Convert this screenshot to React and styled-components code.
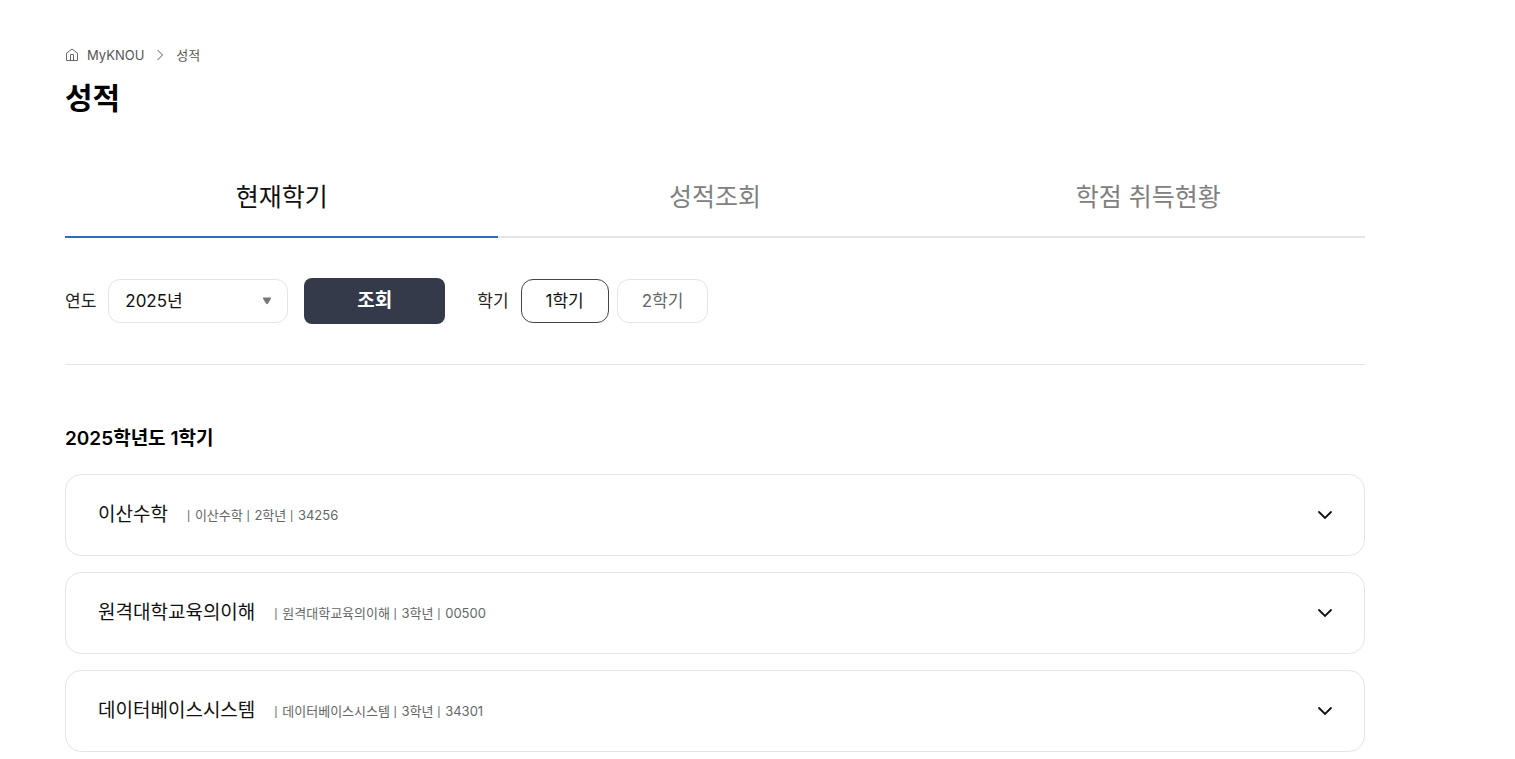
import { useState } from "react";
import styled, { createGlobalStyle } from "styled-components";

const tabs = ["현재학기", "성적조회", "학점 취득현황"];

const subjects = [
  { name: "이산수학", grade: "2학년", code: "34256" },
  { name: "원격대학교육의이해", grade: "3학년", code: "00500" },
  { name: "데이터베이스시스템", grade: "3학년", code: "34301" },
];

const Grades = () => {
  const [tab, setTab] = useState(0);
  const [semester, setSemester] = useState(1);

  return (
    <Container>
      <Breadcrumb aria-label="breadcrumb">
        <a href="#home">
          <svg width="14" height="14" viewBox="0 0 14 14" fill="none" stroke="#666">
            <path d="M1.500 5.200 7 1l5.500 4.200v7.300h-11z" strokeLinejoin="round" />
            <path d="M5.500 12V6.500h3V12" />
          </svg>
          MyKNOU
        </a>
        <svg width="8" height="12" viewBox="0 0 8 12" fill="none" stroke="#555">
          <path d="m1.500 1 5 5-5 5" />
        </svg>
        <a href="#grades">성적</a>
      </Breadcrumb>
      <PageTitle>성적</PageTitle>

      <TabList>
        {tabs.map((name, index) => (
          <Tab key={name} $active={tab === index} onClick={() => setTab(index)}>
            {name}
          </Tab>
        ))}
      </TabList>

      <Filter>
        <label htmlFor="year">연도</label>
        <SelectBox>
          <select id="year" defaultValue="2025">
            <option value="2025">2025년</option>
            <option value="2024">2024년</option>
          </select>
          <svg width="10" height="8" viewBox="0 0 10 8" fill="#777">
            <path d="M1.800.5h6.400q1.400 0 .7 1.200L6 6.500q-1 1.300-2 0L1.100 1.700Q.4.5 1.800.5z" />
          </svg>
        </SelectBox>
        <SearchButton>조회</SearchButton>
        <span>학기</span>
        <SemesterGroup>
          {[1, 2].map((item) => (
            <SemesterButton
              key={item}
              $active={semester === item}
              onClick={() => setSemester(item)}
            >
              {item}학기
            </SemesterButton>
          ))}
        </SemesterGroup>
      </Filter>

      <SectionTitle>2025학년도 1학기</SectionTitle>
      <SubjectList>
        {subjects.map((item) => (
          <li key={item.code}>
            <SubjectButton aria-expanded="false">
              <span className="name">{item.name}</span>
              <span className="info">
                <Bar>|</Bar> {item.name} <Bar>|</Bar> {item.grade} <Bar>|</Bar>{" "}
                {item.code}
              </span>
              <svg
                width="16"
                height="10"
                viewBox="0 0 16 10"
                fill="none"
                stroke="#111"
                strokeWidth="1.8"
                strokeLinecap="round"
              >
                <path d="m2 2 6 6 6-6" />
              </svg>
            </SubjectButton>
          </li>
        ))}
      </SubjectList>
    </Container>
  );
};

export default function App() {
  return (
    <>
      <GlobalStyle />
      <Grades />
    </>
  );
}

const GlobalStyle = createGlobalStyle`
  * {
    box-sizing: border-box;
  }
  body {
    margin: 0;
    background: #fff;
    color: #111;
  }
  body, button, select {
    font-family: Inter, "Noto Sans CJK KR", sans-serif;
  }
  button {
    cursor: pointer;
    line-height: 24px;
  }
  a {
    color: inherit;
    text-decoration: none;
  }
`;

const Container = styled.main`
  max-width: 1365px;
  padding: 45px 0 7px 65px;
`;

const Breadcrumb = styled.nav`
  display: flex;
  align-items: center;
  gap: 12px;
  height: 20px;
  font-size: 13px;
  line-height: 20px;
  color: #555;
  a {
    display: flex;
    align-items: center;
    gap: 8px;
  }
`;

const PageTitle = styled.h1`
  margin: 11px 0 0;
  font-size: 30px;
  line-height: 44px;
  font-weight: 700;
  color: #000;
`;

const TabList = styled.div`
  display: flex;
  margin-top: 36px;
`;

const Tab = styled.button`
  flex: 1;
  height: 82px;
  padding: 2px 0 0;
  border: 0;
  border-bottom: 2px solid ${({ $active }) => ($active ? "#3068c4" : "#e5e5e5")};
  background: none;
  font-size: 25px;
  color: ${({ $active }) => ($active ? "#111" : "#808080")};
`;

const Filter = styled.div`
  display: flex;
  align-items: center;
  padding: 40px 0;
  border-bottom: 1px solid #e5e5e5;
  font-size: 17px;
  line-height: 24px;
  color: #222;
`;

const SelectBox = styled.div`
  position: relative;
  margin: 0 16px 0 12px;
  select {
    display: block;
    width: 180px;
    height: 44px;
    padding: 0 16px;
    border: 1px solid #e5e5e5;
    border-radius: 12px;
    appearance: none;
    background: #fff;
    font-size: 17px;
    color: #111;
  }
  svg {
    position: absolute;
    top: 18px;
    right: 16px;
    pointer-events: none;
  }
`;

const SearchButton = styled.button`
  width: 141px;
  height: 46px;
  margin-right: 32px;
  border: 0;
  border-radius: 8px;
  background: #353a4a;
  font-size: 19px;
  font-weight: 700;
  color: #fff;
`;

const SemesterGroup = styled.div`
  display: flex;
  gap: 8px;
  margin-left: 12px;
`;

const SemesterButton = styled.button`
  height: 44px;
  padding: 0 24px;
  border: 1px solid ${({ $active }) => ($active ? "#444" : "#e5e5e5")};
  border-radius: 12px;
  background: #fff;
  font-size: 17px;
  color: ${({ $active }) => ($active ? "#111" : "#666")};
`;

const SectionTitle = styled.h2`
  margin: 60px 0 21px;
  font-size: 19px;
  line-height: 28px;
  font-weight: 600;
  color: #000;
`;

const SubjectList = styled.ul`
  display: flex;
  flex-direction: column;
  gap: 16px;
  margin: 0;
  padding: 0;
  list-style: none;
`;

const SubjectButton = styled.button`
  display: flex;
  align-items: center;
  width: 100%;
  height: 82px;
  padding: 0 31px 0 32px;
  border: 1px solid #e5e5e5;
  border-radius: 16px;
  background: #fff;
  text-align: left;
  .name {
    font-size: 19px;
    color: #111;
  }
  .info {
    margin-left: 19px;
    font-size: 13px;
    color: #666;
  }
  svg {
    margin-left: auto;
  }
`;

const Bar = styled.span`
  padding-right: 1px;
  font-size: 10px;
  line-height: 1;
  color: #444;
`;
